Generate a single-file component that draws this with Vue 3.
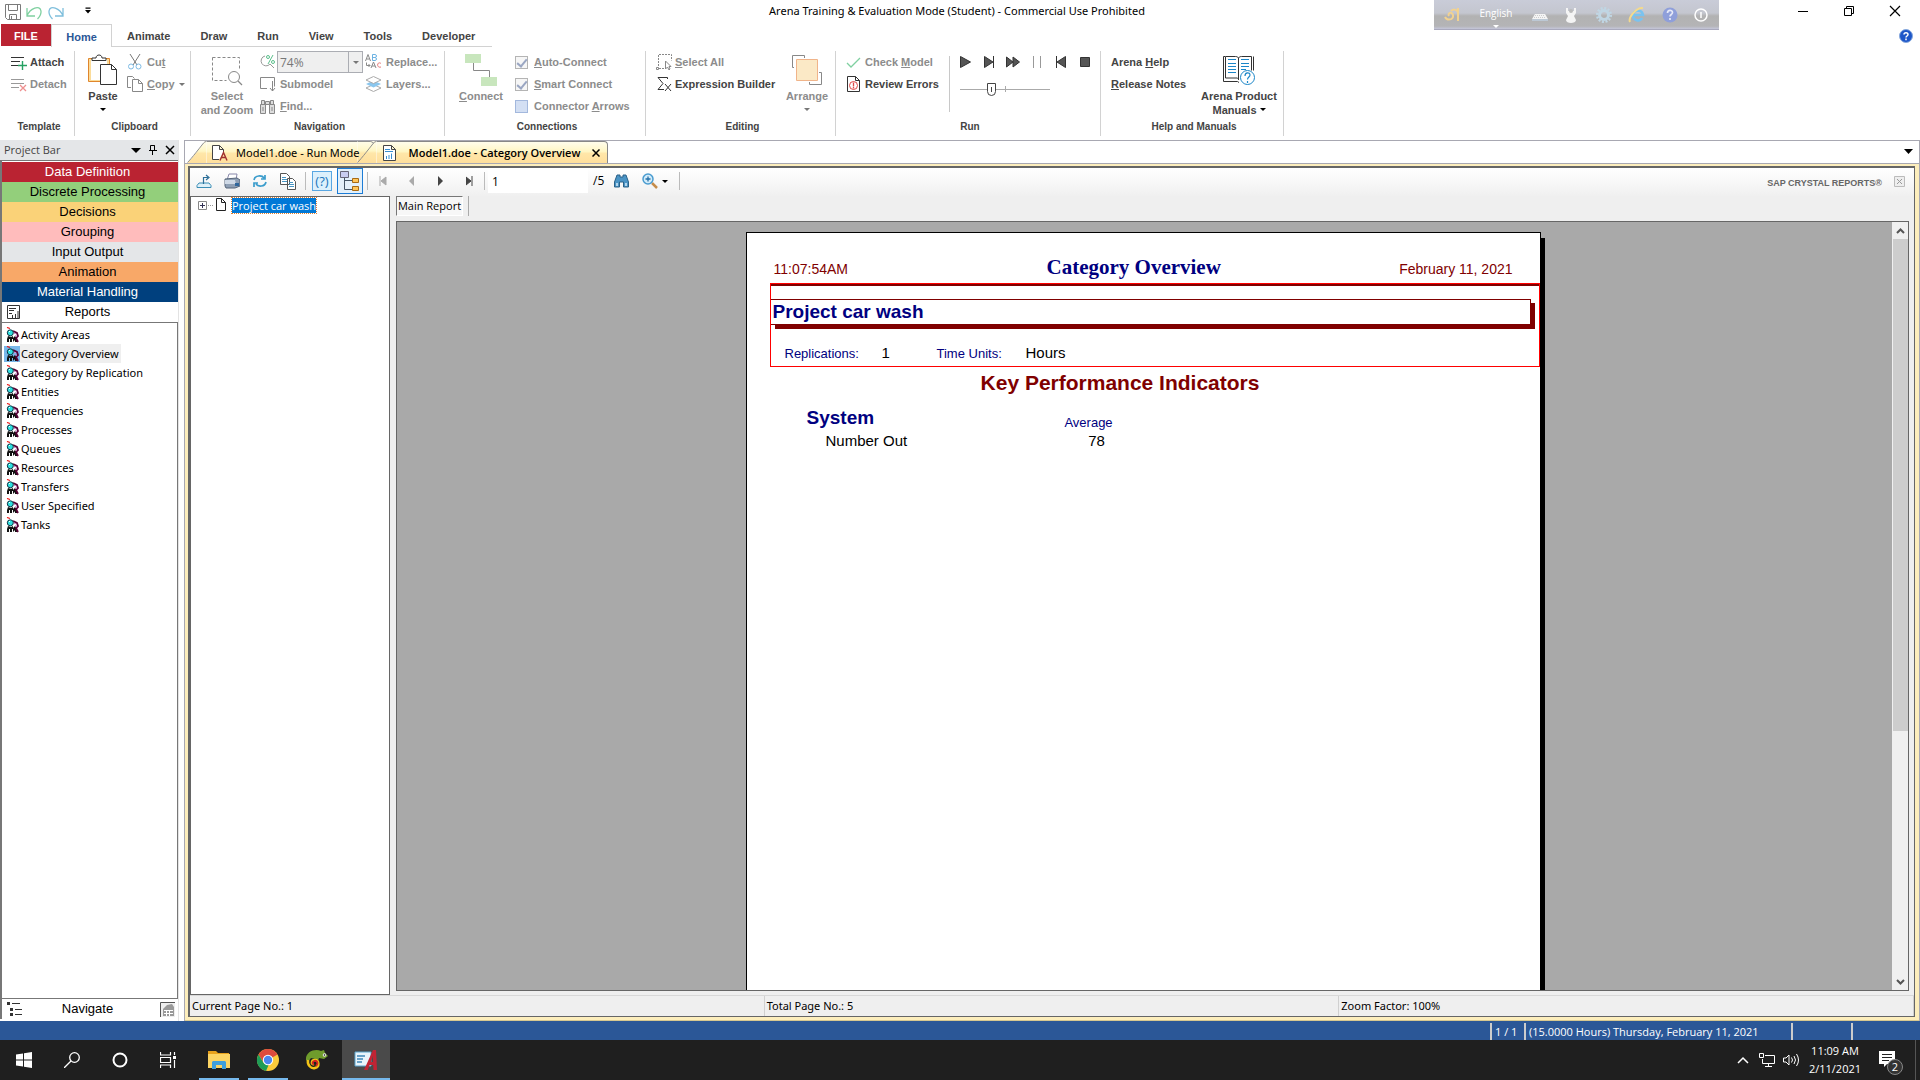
<script setup>
import { ref } from 'vue'

const menuTabs = ['Animate', 'Draw', 'Run', 'View', 'Tools', 'Developer']
const panels = [
  { name: 'Data Definition', tone: 'red' },
  { name: 'Discrete Processing', tone: 'green' },
  { name: 'Decisions', tone: 'yellow' },
  { name: 'Grouping', tone: 'pink' },
  { name: 'Input Output', tone: 'grey' },
  { name: 'Animation', tone: 'orange' },
  { name: 'Material Handling', tone: 'navy' }
]
const reports = [
  'Activity Areas', 'Category Overview', 'Category by Replication', 'Entities',
  'Frequencies', 'Processes', 'Queues', 'Resources', 'Transfers', 'User Specified', 'Tanks'
]
const selected = ref('Category Overview')
const zoom = ref('74%')
const pageNo = ref('1')
</script>

<template>
  <div class="app">
    <header class="titlebar">
      <div class="quick">
        <button aria-label="Save">
          <svg width="16" height="16" viewBox="0 0 16 16" fill="none" stroke="#7a7a7a"><path d="M.5 .5h15v15H2.5l-2-2zM3.500 .5v6h9v-6M4.500 15.500v-5h7v5M6.500 12v3" /></svg>
        </button>
        <button aria-label="Undo">
          <svg width="18" height="16" viewBox="0 0 18 16" fill="none" stroke="#7fd0a0" stroke-width="1.300"><path d="M2 4v8h8M2 12C5 4 15 .5 16 7c.3 3-1.500 6-3.500 8" /></svg>
        </button>
        <button aria-label="Redo">
          <svg width="18" height="16" viewBox="0 0 18 16" fill="none" stroke="#7fbfdc" stroke-width="1.300"><path d="M16 4v8H8M16 12C13 4 3 .5 2 7c-.3 3 1.500 6 3.500 8" /></svg>
        </button>
        <button class="more" aria-label="Customize toolbar">
          <svg width="6" height="7" viewBox="0 0 6 7"><path d="M.5 .5h5v1.300h-5zM0 3h6L3 6.500z" fill="#000" /></svg>
        </button>
      </div>
      <h1>Arena Training &amp; Evaluation Mode (Student) - Commercial Use Prohibited</h1>
      <div class="winbtns">
        <button aria-label="Minimize"><svg width="12" height="12"><path d="M1 6.500h10" stroke="#000" /></svg></button>
        <button aria-label="Restore"><svg width="12" height="12" fill="none" stroke="#000"><path d="M1.500 3.500h7v7h-7zM3.500 3V1.500h7v7H9" /></svg></button>
        <button aria-label="Close"><svg width="12" height="12"><path d="M1 1l10 10M11 1L1 11" stroke="#000" stroke-width="1.200" /></svg></button>
      </div>
      <div class="ime">
        <svg width="16" height="16" viewBox="0 0 16 16" fill="none" stroke="#f2d290" stroke-width="2"><path d="M1 10c2 4 9 3 8-2-1-4-6-2-4 1M14 1v13M7 4c2-2 5-2 7 1" /></svg>
        <span class="lang">English<i></i></span>
        <svg width="16" height="16" viewBox="0 0 16 16"><path d="M3 7h10l3 5H0z" fill="#f4f4f4" /><path d="M0 12h16v2H0z" fill="#bcc8d4" /><path d="M3 8.500h10M2 10.500h12" stroke="#ccc" stroke-dasharray="1 1" /></svg>
        <svg width="16" height="18" viewBox="0 0 16 18"><path d="M3 2h2v3h6V2h2v5l-2 3 2 4c0 4-10 4-10 0l2-4-2-3z" fill="#f4f4f4" /><circle cx="8" cy="5" r="2" fill="#bbb" /></svg>
        <svg width="18" height="18" viewBox="0 0 18 18" fill="none" stroke="#c0d6e4"><circle cx="9" cy="9" r="4.500" stroke-width="3" /><circle cx="9" cy="9" r="6.800" stroke-width="2.500" stroke-dasharray="2 1.560" /></svg>
        <svg width="18" height="18" viewBox="0 0 18 18" fill="none"><path d="M14 12c-2 4-9 3-9-3 0-5 9-6 10 0H6" stroke="#79c3f0" stroke-width="2.500" /><path d="M2 16C0 12 8 1 15 2" stroke="#f4da8c" stroke-width="2" /></svg>
        <svg width="16" height="16" viewBox="0 0 16 16"><circle cx="8" cy="8" r="7.500" fill="#8f9fda" /><path d="M5.500 6c0-3.500 5-3.500 5-.5C10.500 7.500 8 7.500 8 9.500M8 11v2" fill="none" stroke="#e6e9f8" stroke-width="1.700" /></svg>
        <svg width="16" height="16" viewBox="0 0 16 16" fill="none" stroke="#fff"><circle cx="8" cy="8" r="6" stroke-width="1.500" /><path d="M8 5v6" stroke-width="1.500" /></svg>
      </div>
    </header>

    <nav class="tabs">
      <button class="file">FILE</button>
      <button class="home">Home</button>
      <div class="rest">
        <button v-for="t in menuTabs" :key="t">{{ t }}</button>
      </div>
      <button class="help" aria-label="Help">
        <svg width="14" height="14" viewBox="0 0 14 14"><circle cx="7" cy="7" r="6.500" fill="#1d56c8" stroke="#86a8dc" /><path d="M5 5.500C5 3 9 3 9 5.500 9 7 7 7 7 8.500M7 9.500v1.800" fill="none" stroke="#fff" stroke-width="1.500" /></svg>
      </button>
    </nav>

    <section class="ribbon">
      <div class="group g-template">
        <div class="body col">
          <button class="cmd"><svg width="18" height="16" viewBox="0 0 18 16"><path d="M1 3.500h13M1 7.500h9M1 11.500h8" stroke="#333" stroke-width="1.200" /><path d="M12.500 7v9M8 11.500h9" stroke="#25a162" stroke-width="1.400" /></svg>Attach</button>
          <button class="cmd" disabled><svg width="18" height="16" viewBox="0 0 18 16"><path d="M1 3.500h13M1 7.500h13M1 11.500h8" stroke="#999" /><path d="M10 9l6 6M16 9l-6 6" stroke="#ee8f8f" stroke-width="1.300" /></svg>Detach</button>
        </div>
        <div class="label">Template</div>
      </div>

      <div class="group g-clip">
        <div class="body">
          <button class="big paste">
            <svg width="32" height="32" viewBox="0 0 32 32"><path d="M1.500 4.500h21v23h-21z" fill="#fbdc9a" stroke="#e0862d" /><path d="M4 6h16v20H4z" fill="#fff" /><path d="M5 6.500V4h4c0-4 6-4 6 0h4v2.500z" fill="#fff" stroke="#333" /><path d="M13.500 10.500h11l5 5v15h-16z" fill="#fff" stroke="#333" /><path d="M24.500 10.500v5h5" fill="none" stroke="#333" /></svg>
            Paste<i class="arr black"></i>
          </button>
          <div class="col">
            <button class="cmd" disabled><svg width="16" height="16" viewBox="0 0 16 16" fill="none"><path d="M3 0l7 11M13 0L6 11" stroke="#777" /><circle cx="4" cy="12.500" r="2.500" stroke="#7dbbe5" /><circle cx="11.500" cy="12.500" r="2.500" stroke="#7dbbe5" /></svg><span class="lead">Cu<u>t</u></span></button>
            <button class="cmd" disabled><svg width="16" height="16" viewBox="0 0 16 16" fill="none" stroke="#888"><path d="M4 11.500H.5v-11h5l2 2" /><path d="M5.500 3.500h6l4 4v8h-10zM11.500 3.500v4h4" /></svg><span class="lead"><u>C</u>opy</span><i class="arr"></i></button>
          </div>
        </div>
        <div class="label">Clipboard</div>
      </div>

      <div class="group g-nav">
        <div class="body">
          <button class="big select" disabled>
            <svg width="32" height="32" viewBox="0 0 32 32" fill="none" stroke="#888"><path d="M1.500 3.500h27v13M1.500 3.500v23h14" stroke-dasharray="3 2" /><circle cx="23" cy="23" r="5.500" /><path d="M27 27l4 4" stroke-width="1.300" /></svg>
            Select<br>and Zoom
          </button>
          <div class="col">
            <div class="cmd zoomrow">
              <svg width="17" height="16" viewBox="0 0 17 16" fill="none"><path d="M6 2a5 5 0 1 0 5 8M11 10l4 4" stroke="#999" /><circle cx="9" cy="3" r="1.500" stroke="#5cc08d" /><circle cx="14" cy="8" r="1.500" stroke="#5cc08d" /><path d="M14 1L9 10" stroke="#5cc08d" /></svg>
              <div class="combo"><input v-model="zoom" aria-label="Zoom level"><button aria-label="Zoom list"><i class="arr"></i></button></div>
            </div>
            <button class="cmd" disabled><svg width="17" height="16" viewBox="0 0 17 16" fill="none" stroke="#888"><path d="M8 12.500H1.500v-11h14v9M13.500 5v10M11 12l2.500 3L16 12" /></svg><span class="lead">Submodel</span></button>
            <button class="cmd" disabled><svg width="17" height="16" viewBox="0 0 17 16" fill="#ddd" stroke="#888"><path d="M1.500 6.500h5v9h-5zM10.500 6.500h5v9h-5zM2.500 2.500h3v4h-3zM11.500 2.500h3v4h-3zM6.500 3.500h4v3h-4zM4 9v4M13 9v4" /></svg><span class="lead"><u>F</u>ind...</span></button>
          </div>
          <div class="col third">
            <button class="cmd" disabled><svg width="17" height="16" viewBox="0 0 17 16" fill="none"><path d="M.5 7L3 .5 5.500 7M1.500 5h3M6 14l2.500-6L11 14M7 12h3" stroke="#888" /><path d="M7.500 .5v6h2.500c2 0 2-3 0-3 2 0 2-3 0-3zM7.500 3.500H10" stroke="#6db3e3" /><path d="M16 9.500c-4-3-5 5-0 3.500" stroke="#e97a7a" /><path d="M1.500 8.500v3H5M3.500 10L5 11.500 3.500 13" stroke="#888" /></svg><span class="lead">Replace...</span></button>
            <button class="cmd" disabled><svg width="17" height="16" viewBox="0 0 17 16"><path d="M1 12l7.500-3.500L16 12l-7.500 3.500z" fill="#fff" stroke="#aaa" /><path d="M1 8l7.500-3.500L16 8l-7.500 3.500z" fill="#8ac6ee" /><path d="M1 4L8.500 .5 16 4 8.500 7.500z" fill="#fff" stroke="#aaa" /></svg><span class="lead">Layers...</span></button>
          </div>
        </div>
        <div class="label">Navigation</div>
      </div>

      <div class="group g-conn">
        <div class="body">
          <button class="big connect" disabled>
            <svg width="32" height="32" viewBox="0 0 32 32"><path d="M0 0h16v9H0zM16 23h16v9H16z" fill="#c8e6bd" /><path d="M8.500 9v7.500h16V23" fill="none" stroke="#888" /></svg>
            <span><u>C</u>onnect</span>
          </button>
          <div class="col">
            <label class="check"><input type="checkbox" checked disabled><span><u>A</u>uto-Connect</span></label>
            <label class="check"><input type="checkbox" checked disabled><span><u>S</u>mart Connect</span></label>
            <label class="check"><input class="blue" type="checkbox" disabled><span>Connector <u>A</u>rrows</span></label>
          </div>
        </div>
        <div class="label">Connections</div>
      </div>

      <div class="group g-edit">
        <div class="body">
          <div class="col">
            <button class="cmd" disabled><svg width="16" height="16" viewBox="0 0 16 16" fill="none" stroke="#888"><path d="M2.500 12V.5h13v6M3 14.500h5" stroke-dasharray="2 1" /><path d="M.5 13.500h2v2h-2zM9.500 7v8l2-2 1.500 3 1-1-1-2.500h2z" fill="#fff" /></svg><span class="tight"><u>S</u>elect All</span></button>
            <button class="cmd"><svg width="16" height="16" viewBox="0 0 16 16" fill="none" stroke="#333"><path d="M11.500 3V1.500H2L7 7.500l-5 6h6M9 8l6 7M15 8l-6 7" /></svg><span class="tight">Expression Builder</span></button>
          </div>
          <button class="big arrange" disabled>
            <svg width="32" height="32" viewBox="0 0 32 32"><path d="M3 13.500H1.500v-12h12V4M28 18.500h2.500v12h-12V28" fill="none" stroke="#888" /><path d="M5.500 5.500h21v21h-21z" fill="#fbe9c6" stroke="#f0b48a" /></svg>
            Arrange<i class="arr"></i>
          </button>
        </div>
        <div class="label">Editing</div>
      </div>

      <div class="group g-run">
        <div class="body">
          <div class="col checks">
            <button class="cmd" disabled><svg width="16" height="16" viewBox="0 0 16 16"><path d="M1 9l4 4L14 4" fill="none" stroke="#7fd0a0" stroke-width="1.300" /></svg><span class="tight">Check <u>M</u>odel</span></button>
            <button class="cmd"><svg width="16" height="16" viewBox="0 0 16 16"><path d="M1.500 .5h8l4 4v11h-12zM9.500 .5v4h4" fill="#fff" stroke="#333" /><circle cx="7.500" cy="9.500" r="4" fill="none" stroke="#e04a4a" /><path d="M7.500 6.500v4M7.500 11v1.500" stroke="#e04a4a" stroke-width="1.300" /></svg><span class="tight">Review Errors</span></button>
          </div>
          <div class="player">
            <div class="keys">
              <button aria-label="Go"><svg width="14" height="12" viewBox="0 0 14 12"><path d="M2.500 .5l10 5.500-10 5.500z" fill="#555" stroke="#333" /></svg></button>
              <button aria-label="Step"><svg width="14" height="12" viewBox="0 0 14 12"><path d="M2.500 .5L11 6l-8.500 5.500z" fill="#555" stroke="#333" /><path d="M11.500 0v12" stroke="#333" /></svg></button>
              <button aria-label="Fast forward"><svg width="14" height="12" viewBox="0 0 14 12"><path d="M.5 1L7 6 .5 11zM7 1l6.500 5L7 11z" fill="#555" stroke="#333" /></svg></button>
              <button disabled aria-label="Pause"><svg width="14" height="12" viewBox="0 0 14 12"><path d="M3.500 0v12M10.500 0v12" stroke="#999" /></svg></button>
              <button aria-label="Start over"><svg width="14" height="12" viewBox="0 0 14 12"><path d="M11.500 .5L3 6l8.500 5.500z" fill="#555" stroke="#333" /><path d="M2.500 0v12" stroke="#333" /></svg></button>
              <button aria-label="End"><svg width="14" height="12" viewBox="0 0 14 12"><path d="M2.500 1.500h9v9h-9z" fill="#555" stroke="#333" /></svg></button>
            </div>
            <div class="slider">
              <input class="speed" type="range" min="0" max="100" value="33" aria-label="Run speed">
            </div>
          </div>
        </div>
        <div class="label">Run</div>
      </div>

      <div class="group g-help">
        <div class="body">
          <div class="col">
            <button class="cmd">Arena&nbsp;<u>H</u>elp</button>
            <button class="cmd"><u>R</u>elease Notes</button>
          </div>
          <button class="big manuals">
            <svg width="34" height="32" viewBox="0 0 34 32" fill="none"><path d="M3.500 2.500H1.500v25h14l1.500 1M3.500 2.500h10c2 0 3 1 3 2 0-1 1-2 3-2h10v14M3.500 3v21h12l1 1M31.500 2.500v14M16.500 4v22" stroke="#333" /><path d="M6 5.500h8M6 9.500h8M6 12.500h8M6 15.500h8M6 18.500h8M19 5.500h8M19 9.500h8M19 12.500h8M19 15.500h5" stroke="#1b86c8" /><circle cx="25.500" cy="23.500" r="7" stroke="#1b86c8" fill="#fff" /><path d="M23 22c0-4 5-4 5-1 0 2-2.500 2-2.500 4.500M25.500 27v2" stroke="#1b86c8" stroke-width="1.200" /></svg>
            Arena Product<br><span>Manuals<i class="arr black inline"></i></span>
          </button>
        </div>
        <div class="label">Help and Manuals</div>
      </div>
    </section>

    <main>
      <aside class="projectbar">
        <div class="bar-head">
          <span>Project Bar</span>
          <button aria-label="Bar menu"><svg width="10" height="10"><path d="M0 3h10L5 8z" fill="#000" /></svg></button>
          <button aria-label="Pin"><svg width="8" height="10" fill="none" stroke="#000"><path d="M1.500 5.500v-5h4v5M0 5.500h8M3.500 6v4M5.500 .5v5" /></svg></button>
          <button aria-label="Close bar"><svg width="10" height="10"><path d="M1 1l8 8M9 1L1 9" stroke="#000" stroke-width="1.500" /></svg></button>
        </div>
        <div class="bar-body">
          <button v-for="p in panels" :key="p.name" class="panel" :class="p.tone">{{ p.name }}</button>
          <button class="panel">
            <svg width="14" height="14" viewBox="0 0 14 14" fill="none" stroke="#333"><path d="M.5 .5h12v13H.5zM2 3.500h7M2 5.500h5M2 8.500h3M5.500 13v-3M8.500 13V9M11 13V6" /></svg>
            Reports
          </button>
          <ul class="list">
            <li v-for="r in reports" :key="r" :class="{ on: r === selected }">
              <button @click="selected = r">
                <svg width="16" height="16" viewBox="0 0 16 16"><path d="M3 .5l3 1" stroke="#e11" stroke-width="1.300" /><path d="M4 9l3 1 2-1v3H8v3H6v-3H5v3H3v-3zM9 11l2-2 2 3v3h-2v-2l-2 2z" fill="#111" /><path d="M9 4l4 2 1 3-2 2 2 4" fill="none" stroke="#503" stroke-width="1.800" /><path d="M10 6.500h2M11 8.500l2 1" stroke="#c8c" /><circle cx="6.300" cy="5.800" r="3" fill="#2fe0e0" stroke="#134" /><path d="M5 5l1-1" stroke="#fff" /></svg>
                <span>{{ r }}</span>
              </button>
            </li>
          </ul>
          <button class="panel">
            <svg width="16" height="14" viewBox="0 0 16 14" stroke="#333"><path d="M0 1.500h3M3 7.500h3M3 12.500h3" stroke-width="3" /><path d="M5 1.500h8M8 7.500h7M8 12.500h7" /></svg>
            Navigate
            <svg class="end" width="15" height="15" viewBox="0 0 15 15"><path d="M0 0h15v15H0z" fill="#eee" /><path d="M.5 15V.5H15" fill="none" stroke="#555" /><path d="M3 7l4-4 5-1 2 3v9H3z" fill="#999" /><path d="M4 8.500h9M4 11.500h9M6.500 8v6M9.500 8v6" stroke="#fff" /></svg>
          </button>
        </div>
      </aside>

      <section class="docs">
        <div class="strip">
          <svg class="slant" width="20" height="23" viewBox="0 0 20 23"><path d="M0 23C3 21 16 3 17 2q1-1.500 3-1.500V23z" fill="url(#tabfill)" /><path d="M0 22.500C3 20 16 3 17 2q1-1.500 3-1.500" fill="none" stroke="#888" /><defs><linearGradient id="tabfill" x1="0" y1="0" x2="0" y2="1"><stop offset="0" stop-color="#fffdec" /><stop offset=".45" stop-color="#fff6c4" /><stop offset=".55" stop-color="#ffe6a8" /><stop offset="1" stop-color="#ffdf9c" /></linearGradient></defs></svg>
          <button class="tab one">
            <svg width="16" height="16" viewBox="0 0 16 16" fill="none"><path d="M7 14.500H.5V.5h7l4 4V7M7.500 .5v4h4" stroke="#444" fill="#fff" /><path d="M8 15.500l3.500-8 3.500 8M9 12.500h5" stroke="#a03030" stroke-width="1.400" /></svg>
            Model1.doe - Run Mode
          </button>
          <svg class="slant" width="20" height="23" viewBox="0 0 20 23"><path d="M0 0H20V23H0z" fill="url(#tabfill)" /><path d="M0 .5h14l3 1.500M0 22.500C3 20 16 3 17 2q1-1.500 3-1.500" fill="none" stroke="#888" /></svg>
          <button class="tab two">
            <svg width="14" height="16" viewBox="0 0 14 16" fill="none"><path d="M.5 .5h8l4 4v11H.5zM8.500 .5v4h4" fill="#fff" stroke="#444" /><path d="M2 4.500h5M2 6.500h8M3.500 14v-3M6 14v-4M8.500 14V8.500" stroke="#3a8fd0" /></svg>
            <b>Model1.doe - Category Overview</b>
            <svg width="8" height="8"><path d="M.5 .5l7 7M7.500 .5l-7 7" stroke="#000" stroke-width="1.500" /></svg>
          </button>
          <button class="striparrow" aria-label="Tab list"><svg width="9" height="5"><path d="M0 0h9L4.500 5z" fill="#000" /></svg></button>
        </div>

        <div class="frame">
          <div class="viewer">
            <div class="tools">
              <button aria-label="Export"><svg width="16" height="14" viewBox="0 0 16 14" fill="none"><path d="M3 9h10l2 2.500v2H1v-2z" fill="#dff0f8" stroke="#3a8db5" /><path d="M7.500 10V3.500H12M10 1l3 2.500L10 6" stroke="#2c6f98" stroke-width="1.200" /></svg></button>
              <button aria-label="Print"><svg width="16" height="16" viewBox="0 0 16 16"><path d="M5 1h8l-1 6H3z" fill="#fff" stroke="#88a" /><path d="M1 6l12-1 3 2v6l-5 2H2l-1-2z" fill="#8f9fb4" stroke="#56657a" /><path d="M1 7h10l1 4H1z" fill="#cfd9e6" /><path d="M11 10h4v3h-4z" fill="#31679c" /></svg></button>
              <button aria-label="Refresh"><svg width="16" height="14" viewBox="0 0 16 14" fill="none" stroke="#3a9ccc" stroke-width="1.700"><path d="M2 6c1-5 8-5 10-2M13 1v4H9M14 8c-1 5-8 5-10 2M2 13V9h4" /></svg></button>
              <button aria-label="Copy"><svg width="17" height="17" viewBox="0 0 17 17"><path d="M.5 .5h6l3 3v8h-9zM7.500 5.500h5l3 3v8h-8z" fill="#fff" stroke="#555" /><path d="M2 4.500h4M2 6.500h5M2 8.500h5M9 9.500h4M9 11.500h5M9 13.500h5" stroke="#4795c4" /></svg></button>
              <i class="sep first"></i>
              <button class="hl" aria-label="Parameters">(?)</button>
              <button class="treebtn" aria-label="Toggle group tree"><svg width="20" height="22" viewBox="0 0 20 22"><path d="M4.500 6v13.500H12M5 10.500h7" fill="none" stroke="#456" /><path d="M.5 1.500h8v6h-8z" fill="#c8cdf0" stroke="#667" /><path d="M12.500 8.500h6v4h-6zM12.500 16.500h6v4h-6z" fill="#ffc65a" stroke="#a86a14" /></svg></button>
              <i class="sep"></i>
              <div class="pager">
                <button disabled aria-label="First page"><svg width="8" height="10"><path d="M1 0v10M7 1L2 5l5 4z" stroke="#aaa" fill="#aaa" /></svg></button>
                <button disabled aria-label="Previous page"><svg width="8" height="10"><path d="M6 0v10L1 5z" fill="#aaa" /></svg></button>
                <button aria-label="Next page"><svg width="8" height="10"><path d="M1 0v10l5-5z" fill="#444" /></svg></button>
                <button aria-label="Last page"><svg width="8" height="10"><path d="M6 0v10M0 1l5 4-5 4z" stroke="#444" fill="#444" /></svg></button>
              </div>
              <i class="sep"></i>
              <input v-model="pageNo" class="page" aria-label="Page number">
              <span class="of">/5</span>
              <button aria-label="Find text"><svg width="15" height="14" viewBox="0 0 15 14"><path d="M3 1h3v2h3V1h3l2.500 7v5h-5V8h-4v5h-5V8z" fill="#4a93c4" stroke="#2a6188" /><path d="M3 9v3M12 9v3" stroke="#d4ecfa" stroke-width="1.500" /></svg></button>
              <button class="zoombtn" aria-label="Zoom"><svg width="16" height="16" viewBox="0 0 16 16"><path d="M10 10l5 5" stroke="#c58c4a" stroke-width="2.500" /><circle cx="6" cy="6" r="5" fill="#d3ecfa" stroke="#4a9cd0" stroke-width="1.500" /><path d="M3.500 6h5M6 3.500v5" stroke="#246fa8" stroke-width="1.300" /></svg><i class="arr black"></i></button>
              <i class="sep"></i>
              <span class="brand">SAP CRYSTAL REPORTS®</span>
              <button class="close" aria-label="Close view"><svg width="11" height="11"><path d="M.5 .5h10v10H.500z" fill="#eee" stroke="#bbb" /><path d="M3 3l5 5M8 3L3 8" stroke="#999" /></svg></button>
            </div>

            <div class="work">
              <div class="tree">
                <button class="plus" aria-label="Expand"><svg width="15" height="9"><path d="M.5 .5h8v8h-8z" fill="#fff" stroke="#888" /><path d="M2 4.500h5M4.500 2v5" stroke="#335" /><path d="M10 4.500h5" stroke="#999" stroke-dasharray="1 1" /></svg></button>
                <svg width="10" height="13"><path d="M.5 .5h5l4 4v8h-9zM5.500 .5v4h4" fill="#fff" stroke="#222" /></svg>
                <a href="#main">Project car wash</a>
              </div>
              <div class="right">
                <div class="reporttabs"><button>Main Report</button></div>
                <div id="main" class="view">
                  <div class="canvas">
                    <article class="sheet">
                      <div class="sheet-head">
                        <time>11:07:54AM</time>
                        <h2>Category Overview</h2>
                        <time>February 11, 2021</time>
                      </div>
                      <div class="redbox">
                        <div class="project">Project car wash</div>
                        <div class="meta">
                          <span class="k">Replications:</span><span class="v">1</span>
                          <span class="k">Time Units:</span><span class="v">Hours</span>
                        </div>
                      </div>
                      <h3>Key Performance Indicators</h3>
                      <table>
                        <thead><tr><th class="sys">System</th><th class="avg">Average</th></tr></thead>
                        <tbody><tr><td class="name">Number Out</td><td class="num">78</td></tr></tbody>
                      </table>
                    </article>
                  </div>
                  <div class="scroll">
                    <button aria-label="Scroll up"><svg width="9" height="6"><path d="M1 5l3.500-3.500L8 5" fill="none" stroke="#555" stroke-width="2" /></svg></button>
                    <div class="track"><div class="thumb"></div></div>
                    <button aria-label="Scroll down"><svg width="9" height="6"><path d="M1 1l3.500 3.500L8 1" fill="none" stroke="#555" stroke-width="2" /></svg></button>
                  </div>
                </div>
              </div>
            </div>

            <footer class="viewstatus">
              <span>Current Page No.: 1</span><span>Total Page No.: 5</span><span>Zoom Factor: 100%</span>
            </footer>
          </div>
        </div>
      </section>
    </main>

    <div class="appstatus">
      <span class="n">1 / 1</span><span class="when">(15.0000 Hours) Thursday, February 11, 2021</span><span class="e1"></span><span class="e2"></span>
    </div>

    <footer class="taskbar">
      <button aria-label="Start"><svg width="16" height="16" fill="#fff"><path d="M0 2.500L7 1.500V7.500H0zM8 1.300L16 0v7.500H8zM0 8.500h7v6L0 13.500zM8 8.500h8V16l-8-1.200z" /></svg></button>
      <button aria-label="Search"><svg width="16" height="16" fill="none" stroke="#fff" stroke-width="1.300"><circle cx="10.500" cy="5.500" r="4.800" /><path d="M7 9l-7 7" /></svg></button>
      <button aria-label="Cortana"><svg width="16" height="16" fill="none" stroke="#fff" stroke-width="2"><circle cx="8" cy="8" r="6.500" /></svg></button>
      <button aria-label="Task view"><svg width="16" height="16" fill="none" stroke="#fff" stroke-width="1.200"><path d="M.5 0v3h10V0M.5 5.500h10v5H.5zM.5 16v-3h10v3M14.500 0v3M14.500 8v8" /><path d="M13 4h3v3h-3z" fill="#fff" stroke="none" /></svg></button>
      <div class="apps">
        <button class="app-btn open" aria-label="File Explorer"><svg width="22" height="20" viewBox="0 0 22 20"><path d="M0 1h8l2 2h11v6H0z" fill="#e8a21c" /><path d="M0 4h22v14H0z" fill="#fcd463" /><path d="M4 19v-7l1-1h12l1 1v7h-4v-4H8v4z" fill="#3f9fdc" /></svg></button>
        <button class="app-btn open" aria-label="Chrome"><svg width="24" height="24" viewBox="0 0 24 24"><circle cx="12" cy="12" r="11" fill="#fbcb3c" /><path d="M12 12l-4.500 2.600L2.500 6.500a11 11 0 0 1 19 0z" fill="#dd4b3e" /><path d="M2.500 6.500l5 8.200 5 2.500L10 23A11 11 0 0 1 2.500 6.500z" fill="#1f9d57" /><circle cx="12" cy="12" r="5.200" fill="#fff" /><circle cx="12" cy="12" r="4.200" fill="#4a86f0" /></svg></button>
        <button class="app-btn" aria-label="Chameleon"><svg width="24" height="22" viewBox="0 0 24 22" fill="none"><path d="M1 11C0 3 10-1 16 2l3-1 1 3 3 3-4 3-5-1-1 3-3-2-4-1-3 4z" fill="#6f9c2c" /><path d="M3 11c-1 5 3 9 7 8 5-1 4-8 0-8-4 0-4 5-1 4" stroke="#f4c417" stroke-width="2.500" /><path d="M11 17c3-3 1-6-2-5-2 1-2 3 0 3" stroke="#d6231f" stroke-width="1.800" /><circle cx="19.500" cy="6" r="1.800" fill="#eee" /><circle cx="19.500" cy="6" r=".8" fill="#111" /></svg></button>
        <button class="app-btn active" aria-label="Arena"><svg width="24" height="22" viewBox="0 0 24 22"><path d="M1 3h16v14H1z" fill="#e9f4fb" stroke="#5aa5cf" /><path d="M3 7h8M3 10h6M3 13h5" stroke="#3f86b8" stroke-width="1.500" /><path d="M10 21L19 1h3l1 20h-3.500l-.3-5h-3.500l-2 5zM17 13h2V7z" fill="#c02434" fill-rule="evenodd" /></svg></button>
      </div>
      <div class="tray">
        <button aria-label="Hidden icons"><svg width="12" height="8"><path d="M1 7l5-5 5 5" fill="none" stroke="#fff" stroke-width="1.500" /></svg></button>
        <button aria-label="Network"><svg width="16" height="14" fill="none" stroke="#fff"><path d="M6 2.500h9.500v8H3.500V6M.5 .5h4v4h-4zM9.500 10.500v3M6 13.500h7" /></svg></button>
        <button aria-label="Volume"><svg width="16" height="14" fill="none" stroke="#fff"><path d="M.5 5H3l3-3v10L3 9H.5zM8.500 4.500q2 2.500 0 5M11 3q3 4 0 8M13.500 1q4 6 0 12" /></svg></button>
        <button class="clock"><span>11:09 AM</span><span>2/11/2021</span></button>
        <button class="notif" aria-label="Notifications"><svg width="16" height="16"><path d="M0 0h16v13H8l-3 3v-3H0z" fill="#fff" /><path d="M3 3.500h10M3 6.500h10M3 9.500h7" stroke="#222" /></svg><em>2</em></button>
      </div>
    </footer>
  </div>
</template>

<style>
body {
  background: #fff;
}
</style>

<style scoped>
.app {
  display: flex;
  flex-direction: column;
  min-height: 100vh;
  font: 11px/16px "Open Sans", "Noto Sans", sans-serif;
  color: #000;
}
.app * {
  box-sizing: border-box;
}
button {
  display: flex;
  align-items: center;
  justify-content: center;
  padding: 0;
  border: 0;
  background: none;
  font: inherit;
  color: inherit;
  white-space: nowrap;
}
h1, h2, h3, ul {
  margin: 0;
  padding: 0;
  font-weight: normal;
}
svg {
  flex: none;
}

/* title bar */
.titlebar {
  position: relative;
  display: grid;
  grid-template-columns: 1fr auto 1fr;
  height: 24px;
}
.titlebar h1 {
  padding-right: 6px;
  font: 11px/22px "Noto Sans", sans-serif;
}
.quick {
  display: flex;
  gap: 4px;
  padding-left: 5px;
}
.quick .more {
  margin-left: 16px;
}
.quick .more svg {
  margin-bottom: 4px;
}
.winbtns {
  display: flex;
  justify-content: flex-end;
}
.winbtns button {
  width: 46px;
  height: 22px;
}
.winbtns button:last-child {
  margin-right: 2px;
}
.ime {
  position: absolute;
  top: 0;
  right: 201px;
  z-index: 2;
  display: flex;
  align-items: center;
  justify-content: space-between;
  width: 285px;
  height: 30px;
  padding: 0 10px;
  border-bottom: 1px solid #a9a9bd;
  background: linear-gradient(#c9ccd8, #c4c6cf 45%, #b2b2b2 55%, #b4b4b6 90%, #c4c6da);
}
.ime .lang {
  position: relative;
  padding: 0 4px 4px;
  font-size: 10px;
  color: #fff;
}
.lang i {
  position: absolute;
  left: 18px;
  bottom: -3px;
  border: 3px solid transparent;
  border-top-color: #fff;
  border-bottom: 0;
}

/* ribbon tabs */
.tabs {
  display: flex;
  height: 23px;
  padding-left: 1px;
  font: bold 11px/16px "Liberation Sans", sans-serif;
  color: #444;
}
.file {
  width: 50px;
  height: 22px;
  padding-top: 1px;
  background: #ba2332;
  color: #fff;
}
.home {
  width: 61px;
  padding-top: 1px;
  border: 1px solid #d2d2d2;
  border-bottom: 0;
  color: #2b5797;
}
.rest {
  display: flex;
  padding-right: 2px;
  border-bottom: 1px solid #d2d2d2;
}
.rest button {
  padding: 2px 15px 0;
}
.help {
  margin: 0 7px 0 auto;
}

/* ribbon groups */
.ribbon {
  display: flex;
  height: 93px;
  padding: 4px 0;
  font: bold 11px/14px "Liberation Sans", sans-serif;
  color: #444;
}
.group {
  display: flex;
  flex-direction: column;
  border-right: 1px solid #d2d2d2;
}
.body {
  display: flex;
  height: 66px;
}
.label {
  padding: 1px 0 0 4px;
  font-size: 10px;
  line-height: 18px;
  text-align: center;
}
.col {
  display: flex;
  flex-direction: column;
}
.cmd {
  display: flex;
  align-items: center;
  justify-content: flex-start;
  gap: 2px;
  height: 22px;
}
button:disabled, .check {
  color: #8c8c8c;
}
.cmd .lead {
  padding-left: 2px;
}
.cmd .tight {
  padding-left: 1px;
}
.big {
  flex-direction: column;
  justify-content: flex-start;
  padding-top: 3px;
  line-height: 14px;
}
.big svg {
  margin-bottom: 3px;
}
.arr {
  border: 3px solid transparent;
  border-top: 3px solid #777;
  border-bottom: 0;
}
.arr.black {
  border-top-color: #000;
}
.big > .arr {
  margin-top: 5px;
}
.arr.inline {
  display: inline-block;
  margin: 0 0 3px 3px;
}
.cmd > .arr {
  margin-left: 2px;
}
.g-template {
  width: 75px;
}
.g-template .col {
  padding-left: 10px;
}
.g-clip {
  width: 116px;
}
.paste {
  width: 38px;
  margin: 0 5px 0 9px;
}
.g-nav {
  width: 254px;
}
.select {
  width: 56px;
  margin: 0 4px 0 8px;
}
.third {
  margin-left: 2px;
}
.zoomrow {
  gap: 1px;
}
.combo {
  display: flex;
  width: 86px;
  height: 22px;
  border: 1px solid #abadb3;
  background: #efefef;
}
.combo input {
  flex: 1;
  min-width: 0;
  padding: 0 2px;
  border: 0;
  background: none;
  font: 12px "Open Sans", sans-serif;
  color: #777;
}
.combo button {
  width: 14px;
  border-left: 1px solid #abadb3;
}
.g-conn {
  width: 201px;
}
.connect {
  width: 48px;
  margin: 0 10px 0 12px;
}
.check {
  display: flex;
  align-items: center;
  gap: 6px;
  height: 22px;
}
.check input {
  appearance: none;
  width: 13px;
  height: 13px;
  margin: 0;
  border: 1px solid #b4b4b4;
  background: #f6f6f6;
}
.check input:checked {
  position: relative;
}
.check input:checked::after {
  content: "";
  position: absolute;
  left: 3px;
  top: 0;
  width: 4px;
  height: 8px;
  border: solid #9aa6c2;
  border-width: 0 2px 2px 0;
  transform: rotate(40deg);
}
.check input.blue {
  border-color: #a3b8dd;
  background: #d3dff3;
}
.g-edit {
  width: 190px;
}
.g-edit .col {
  width: 128px;
  padding-left: 10px;
}
.arrange {
  width: 48px;
  margin-left: 9px;
}
.g-run {
  width: 265px;
}
.checks {
  width: 113px;
  height: 56px;
  padding-left: 10px;
}
.player {
  height: 56px;
  margin-top: 5px;
  padding-left: 8px;
  border-left: 1px solid #c8c8c8;
}
.keys {
  display: flex;
  gap: 10px;
}
.slider {
  position: relative;
  padding: 14px 0 0 2px;
}
.speed {
  appearance: none;
  display: block;
  width: 90px;
  height: 14px;
  margin: 0;
  background: linear-gradient(#aaa, #aaa) center / 100% 1px no-repeat, linear-gradient(#aaa, #aaa) 50% 50% / 1px 6px no-repeat;
}
.speed::-webkit-slider-thumb {
  appearance: none;
  width: 9px;
  height: 13px;
  border: 1px solid #444;
  border-radius: 0 0 5px 5px;
  background: linear-gradient(#444, #444) center / 1px 5px no-repeat #fff;
}
.g-help {
  width: 183px;
}
.g-help .col {
  width: 88px;
  padding-left: 10px;
}
.g-help .cmd {
  gap: 0;
}
.manuals {
  width: 84px;
  margin-left: 8px;
}

/* main area */
main {
  display: flex;
  flex: 1;
  gap: 5px;
}
.projectbar {
  display: flex;
  flex-direction: column;
  width: 179px;
  border-right: 1px solid #e3e3e3;
}
.bar-head {
  display: flex;
  align-items: center;
  gap: 8px;
  height: 20px;
  padding: 0 3px 0 4px;
  background: #e4e6e8;
  color: #444;
}
.bar-head span {
  flex: 1;
}
.bar-body {
  display: flex;
  flex: 1;
  flex-direction: column;
  margin-bottom: 2px;
  padding-top: 1px;
  border-left: 2px solid #777;
  border-top: 1px solid #777;
}
.panel {
  position: relative;
  height: 20px;
  padding-right: 5px;
  font: 13px/20px "Liberation Sans", sans-serif;
}
.panel svg {
  position: absolute;
  left: 5px;
  top: 3px;
}
.panel svg.end {
  left: auto;
  right: 3px;
}
.panel.red { background: #ba2332; color: #fff; }
.panel.green { background: #93cf7b; }
.panel.yellow { background: #fad278; }
.panel.pink { background: #ffbcbc; }
.panel.grey { background: #e4e6e8; }
.panel.orange { background: #f8a868; }
.panel.navy { background: #00407e; color: #fff; }
.list {
  flex: 1;
  padding-top: 2px;
  border: 1px solid #777;
  border-left: 0;
  font-family: "Noto Sans", sans-serif;
  list-style: none;
}
.list li {
  display: flex;
  height: 19px;
}
.list button {
  padding-left: 2px;
}
.list span {
  padding: 0 2px 0 1px;
  line-height: 19px;
}
.list .on span {
  background: #efefef;
}
.list .on svg {
  background: #79b7ea;
}

/* document area */
.docs {
  display: flex;
  flex: 1;
  flex-direction: column;
  min-width: 0;
  border: 1px solid #a8a8b2;
  border-bottom: 0;
}
.strip {
  display: flex;
  align-items: flex-end;
  height: 23px;
  padding-left: 2px;
  border-bottom: 1px solid #a8a8b2;
}
.tab {
  justify-content: flex-start;
  height: 22px;
  border-top: 1px solid #888;
  background: linear-gradient(#fffdec, #fff6c4 45%, #ffe6a8 55%, #ffdf9c);
}
.slant {
  height: 22px;
}
.tab.one {
  z-index: 1;
  width: 150px;
  gap: 8px;
  padding-left: 5px;
  font-family: "Noto Sans", sans-serif;
}
.tab.two {
  width: 231px;
  padding: 0 7px 0 6px;
  border-right: 1px solid #888;
  border-radius: 0 4px 0 0;
}
.two b {
  flex: 1;
  font-weight: 600;
}
.striparrow {
  margin: 0 6px 9px auto;
}
.frame {
  display: flex;
  flex: 1;
  padding: 2px 4px 3px 3px;
  border-bottom: 1px solid #d8c890;
  background: #fdeebc;
}
.viewer {
  display: flex;
  flex: 1;
  flex-direction: column;
  min-width: 0;
  border: 1px solid #666;
  border-width: 2px 1px 1px 2px;
  background: #efefef;
}
.tools {
  display: flex;
  align-items: center;
  height: 28px;
  padding-bottom: 2px;
  background: linear-gradient(#fff, #f0f0f0);
}
.tools button {
  width: 28px;
  height: 26px;
}
.sep {
  width: 1px;
  height: 18px;
  background: #bbb;
}
.sep.first {
  margin-left: 3px;
}
.tools .hl {
  width: 20px;
  height: 20px;
  margin: 0 5px 0 6px;
  border: 1px solid #5aa7e2;
  background: #dcf0fc;
  font-size: 13px;
  color: #1b75bb;
}
.tools .treebtn {
  width: 26px;
  margin-right: 4px;
  border: 1px solid #1c7cd6;
  background: #e3f0fa;
}
.pager {
  display: flex;
}
.tools .pager button {
  width: 29px;
}
.page {
  width: 100px;
  height: 23px;
  margin: 0 5px 0 3px;
  padding: 0 4px;
  border: 0;
  background: #fff;
  font: 12px "Open Sans", sans-serif;
}
.of {
  width: 14px;
  font-size: 12px;
}
.tools .zoombtn {
  width: 38px;
  gap: 4px;
  margin: 0 5px 0 1px;
}
.brand {
  margin-left: auto;
  padding-top: 3px;
  font: bold 9px/14px "Liberation Sans", sans-serif;
  color: #666;
}
.tools .close {
  width: 11px;
  margin: 0 9px 0 12px;
}
.work {
  display: flex;
  flex: 1;
  gap: 6px;
}
.tree {
  display: flex;
  align-items: flex-start;
  width: 200px;
  padding: 1px 0 0 7px;
  border: 1px solid #666;
  background: #fff;
}
.tree .plus {
  height: 14px;
  margin-right: 3px;
}
.tree a {
  height: 15px;
  margin-left: 6px;
  outline: 1px dotted #e08030;
  background: #0078d7;
  line-height: 15px;
  color: #fff;
  text-decoration: none;
}
.right {
  display: flex;
  flex: 1;
  flex-direction: column;
  padding: 0 5px 4px 0;
}
.reporttabs {
  width: 73px;
  height: 20px;
  margin-bottom: 5px;
  border-right: 1px solid #aaa;
}
.reporttabs button {
  width: 67px;
  height: 20px;
  border: 1px solid #fff;
  border-top-color: #777;
  border-left-color: #777;
  background: #f7f7f7;
}
.view {
  display: flex;
  flex: 1;
  border: 1px solid #666;
  background: #a9a9a9;
}
.canvas {
  display: flex;
  flex: 1;
  justify-content: center;
  padding: 10px 3px 0 0;
  overflow: hidden;
}
.sheet {
  width: 795px;
  border: 1px solid #000;
  border-bottom: 0;
  box-shadow: 4px 6px 0 #000;
  background: #fff;
  font: 15px/18px "Liberation Sans", sans-serif;
}
.sheet-head {
  display: grid;
  grid-template-columns: 273px 1fr auto;
  align-items: baseline;
  height: 50px;
  padding: 22px 27px 0;
  font-size: 14px;
  color: #800000;
}
.sheet-head h2 {
  font: bold 21px/24px "Liberation Serif", serif;
  color: #000080;
}
.redbox {
  height: 84px;
  margin-left: 23px;
  padding-top: 13px;
  border: 1px solid #f00;
  box-shadow: inset 0 2px #800000;
}
.project {
  height: 26px;
  margin: 2px 8px 0 0;
  padding-left: 2px;
  border: 1px solid #800000;
  border-left: 0;
  box-shadow: 4px 4px 0 #800000;
  background: #fff;
  font: bold 19px/24px "Liberation Sans", sans-serif;
  color: #000080;
}
.meta {
  display: grid;
  grid-template-columns: 97px 55px 89px auto;
  align-items: baseline;
  padding: 19px 0 0 14px;
}
.meta .k {
  font-size: 13px;
  color: #000080;
}
h3 {
  padding: 4px 46px 0 0;
  font: bold 21px/24px "Liberation Sans", sans-serif;
  text-align: center;
  color: #800000;
}
.sheet table {
  margin: 12px 0 0 60px;
  border-collapse: collapse;
}
.sheet th, .sheet td {
  padding: 0;
  line-height: 22px;
}
.sheet .sys {
  width: 246px;
  font-size: 19px;
  text-align: left;
  vertical-align: top;
  color: #000080;
}
.sheet .avg {
  width: 72px;
  padding-top: 9px;
  font-size: 13px;
  font-weight: normal;
  line-height: 14px;
  color: #000080;
}
.sheet .name {
  padding-left: 19px;
}
.sheet .num {
  padding-left: 16px;
  text-align: center;
}
.scroll {
  display: flex;
  flex-direction: column;
  width: 16px;
  background: #f0f0f0;
}
.scroll button {
  height: 17px;
}
.track {
  flex: 1;
}
.thumb {
  height: 67%;
  margin-left: 1px;
  background: #cdcdcd;
}
.viewstatus {
  display: grid;
  grid-template-columns: repeat(3, 1fr);
  height: 21px;
  border-top: 1px solid #d8d8d8;
  font-family: "Noto Sans", sans-serif;
}
.viewstatus span {
  padding-left: 2px;
  border-right: 1px solid #d0d0d0;
  line-height: 20px;
}

/* application status and taskbar */
.appstatus {
  display: flex;
  justify-content: flex-end;
  height: 19px;
  background: #2b5797;
  line-height: 19px;
  color: #fff;
}
.appstatus span {
  margin-top: 2px;
  padding-left: 3px;
  border-left: 2px solid #ccc;
  line-height: 17px;
}
.n { width: 34px; }
.when { width: 267px; }
.e1 { width: 60px; }
.e2 { width: 69px; }
.taskbar {
  display: flex;
  height: 40px;
  background: #1f1f1f;
  color: #fff;
}
.taskbar > button {
  width: 48px;
}
.apps {
  display: flex;
  gap: 1px;
  padding-left: 3px;
}
.taskbar .app-btn {
  position: relative;
  width: 48px;
}
.app-btn.open::after, .app-btn.active::after {
  content: "";
  position: absolute;
  inset: 38px 4px 0;
  background: #76b9ed;
}
.app-btn.active::after {
  inset: 38px 0 0;
}
.taskbar .active {
  background: #4a4a4a;
}
.tray {
  display: flex;
  gap: 8px;
  margin: 0 4px 0 auto;
  padding-right: 8px;
  border-right: 1px solid #555;
}
.tray button {
  min-width: 16px;
}
.clock {
  flex-direction: column;
  width: 56px;
  line-height: 18px;
}
.tray .notif {
  position: relative;
  justify-content: flex-start;
  width: 36px;
  padding-left: 8px;
}
.notif svg {
  margin-bottom: 2px;
}
.notif em {
  position: absolute;
  right: 4px;
  bottom: 5px;
  width: 16px;
  height: 16px;
  border: 1px solid #888;
  border-radius: 50%;
  background: #333;
  line-height: 14px;
  font-style: normal;
  text-align: center;
}
</style>
